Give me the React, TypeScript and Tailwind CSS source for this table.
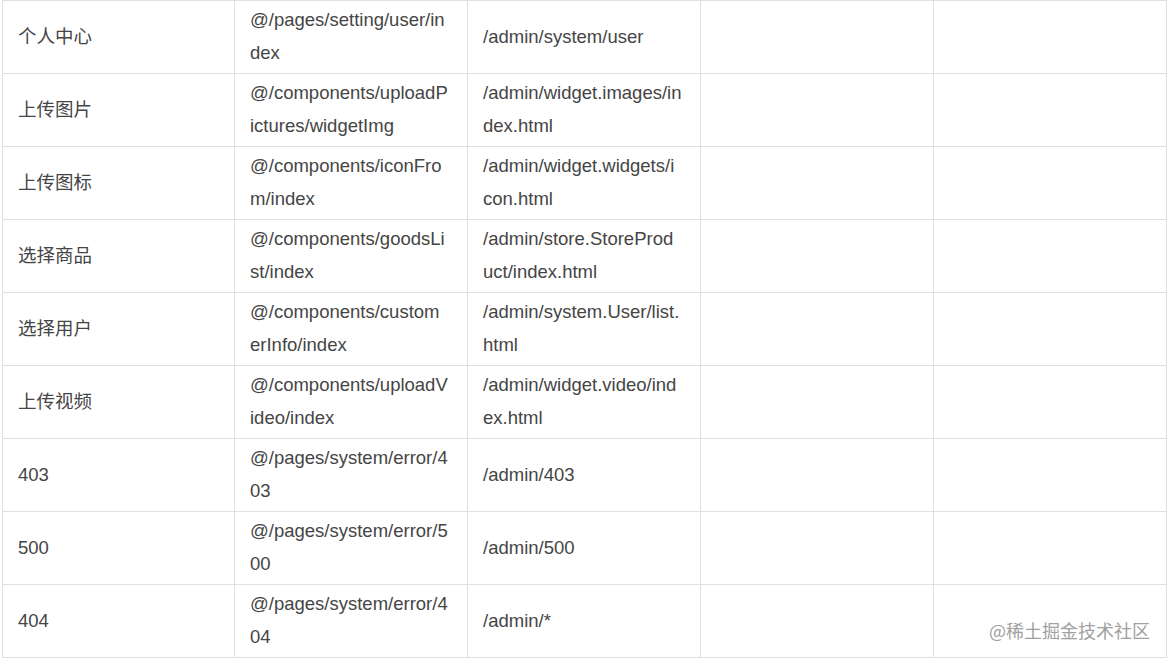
export default function App() {
  const rows = [
    { name: ["个人中心"], path: ["@/pages/setting/user/in", "dex"], url: ["/admin/system/user"] },
    { name: ["上传图片"], path: ["@/components/uploadP", "ictures/widgetImg"], url: ["/admin/widget.images/in", "dex.html"] },
    { name: ["上传图标"], path: ["@/components/iconFro", "m/index"], url: ["/admin/widget.widgets/i", "con.html"] },
    { name: ["选择商品"], path: ["@/components/goodsLi", "st/index"], url: ["/admin/store.StoreProd", "uct/index.html"] },
    { name: ["选择用户"], path: ["@/components/custom", "erInfo/index"], url: ["/admin/system.User/list.", "html"] },
    { name: ["上传视频"], path: ["@/components/uploadV", "ideo/index"], url: ["/admin/widget.video/ind", "ex.html"] },
    { name: ["403"], path: ["@/pages/system/error/4", "03"], url: ["/admin/403"] },
    { name: ["500"], path: ["@/pages/system/error/5", "00"], url: ["/admin/500"] },
    { name: ["404"], path: ["@/pages/system/error/4", "04"], url: ["/admin/*"] },
  ]

  const cell = "border border-[#dfdfdf] px-[15px] pb-[2px] align-middle"

  return (
    <div
      className="relative w-[1170px] h-[662px] bg-white text-[#454545] text-[18.5px] leading-[33px]"
      style={{ fontFamily: '"Liberation Sans", Arial, "Noto Sans CJK SC", sans-serif' }}
    >
      <table className="ml-[2px] border-collapse table-fixed w-[1165px]">
        <colgroup>
          <col className="w-[232px]" />
          <col className="w-[233px]" />
          <col className="w-[233px]" />
          <col className="w-[233px]" />
          <col className="w-[233px]" />
        </colgroup>
        <tbody>
          {rows.map((r, i) => (
            <tr key={i} className="h-[73px]">
              <td className={cell}>
                {r.name.map((l) => (
                  <div key={l} className="whitespace-nowrap">{l}</div>
                ))}
              </td>
              <td className={cell}>
                {r.path.map((l) => (
                  <div key={l} className="whitespace-nowrap">{l}</div>
                ))}
              </td>
              <td className={cell}>
                {r.url.map((l) => (
                  <div key={l} className="whitespace-nowrap">{l}</div>
                ))}
              </td>
              <td className={cell}></td>
              <td className={cell}></td>
            </tr>
          ))}
        </tbody>
      </table>

      {/* watermark */}
      <div
        className="absolute right-[20px] top-[618px] text-[18px] leading-[24px] text-[#a0a0a0]"
        style={{ fontFamily: '"Noto Sans CJK SC", sans-serif', textShadow: "0 0 1px #fff, 0 0 2px #fff" }}
      >
        @稀土掘金技术社区
      </div>
    </div>
  )
}
